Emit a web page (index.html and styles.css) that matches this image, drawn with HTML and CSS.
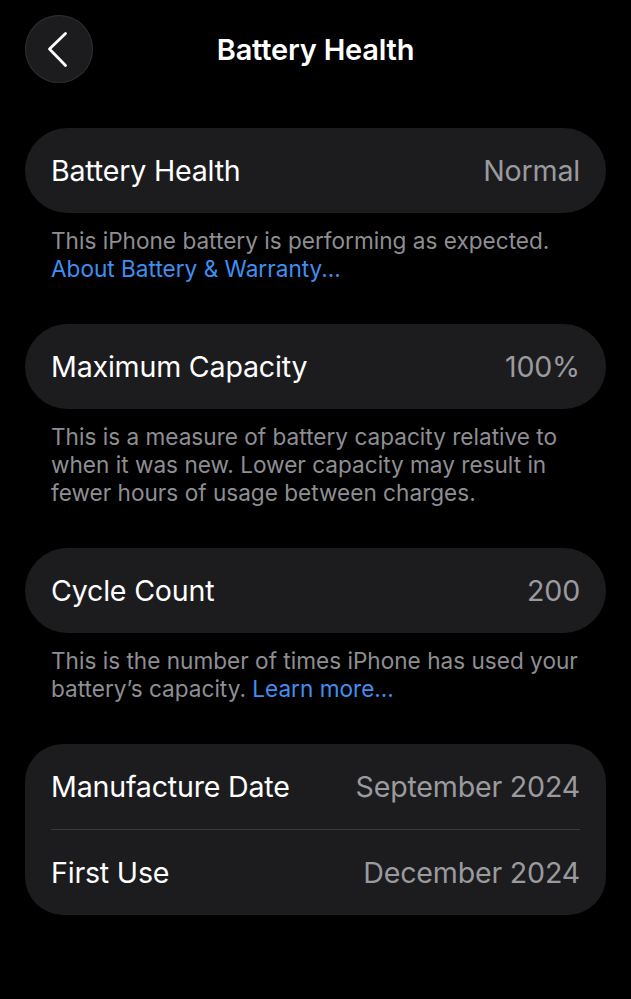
FILE: index.html
```html
<!DOCTYPE html>
<html>
<head>
<meta charset="utf-8">
<link rel="stylesheet" href="styles.css">
</head>
<body>
<div class="screen">
  <header class="header">
    <div class="back">
      <svg width="68" height="68" viewBox="0 0 68 68"><path d="M40.5 18.5 L24.5 34 L40.5 50.5" fill="none" stroke="#ffffff" stroke-width="2.8" stroke-linecap="round" stroke-linejoin="round"/></svg>
    </div>
    <h1 class="title">Battery Health</h1>
    <div></div>
  </header>
  <main class="content">
    <section class="group">
      <div class="card">
        <div class="row"><span class="label">Battery Health</span><span class="value">Normal</span></div>
      </div>
      <p class="footer">This iPhone battery is performing as expected.<br><span class="link">About Battery &amp; Warranty...</span></p>
    </section>
    <section class="group">
      <div class="card">
        <div class="row"><span class="label">Maximum Capacity</span><span class="value">100%</span></div>
      </div>
      <p class="footer">This is a measure of battery capacity relative to when it was new. Lower capacity may result in fewer hours of usage between charges.</p>
    </section>
    <section class="group">
      <div class="card">
        <div class="row"><span class="label">Cycle Count</span><span class="value">200</span></div>
      </div>
      <p class="footer">This is the number of times iPhone has used your battery’s capacity. <span class="link">Learn more...</span></p>
    </section>
    <section class="group">
      <div class="card card-multi">
        <div class="row"><span class="label">Manufacture Date</span><span class="value">September 2024</span></div>
        <div class="sep"></div>
        <div class="row"><span class="label">First Use</span><span class="value">December 2024</span></div>
      </div>
    </section>
  </main>
</div>
</body>
</html>
```
FILE: styles.css
```css
* { box-sizing: border-box; }
html, body { margin: 0; padding: 0; background: #000; }
body {
  font-family: Inter, "Noto Sans", "Liberation Sans", sans-serif;
  color: #fff;
  width: 631px;
  min-height: 999px;
}
.header {
  display: grid;
  grid-template-columns: 1fr auto 1fr;
  align-items: center;
  padding: 15px 25px 0 25px;
  height: 83px;
}
.back {
  width: 68px;
  height: 68px;
  border-radius: 50%;
  background: #1c1c1e;
  box-shadow: inset 0 0 0 1px #2e2e30;
  display: flex;
}
.title {
  margin: 0;
  font-size: 29px;
  font-weight: 600;
  letter-spacing: -0.2px;
  text-align: center;
}
.content {
  padding: 45px 25px 0 25px;
  display: flex;
  flex-direction: column;
  gap: 41px;
}
.card {
  background: #1c1c1e;
  border-radius: 43px;
  padding: 0 26px;
}
.card-multi { border-radius: 38px; }
.row {
  height: 85px;
  display: flex;
  align-items: center;
  justify-content: space-between;
  font-size: 28.6px;
  letter-spacing: -0.2px;
}
.label { color: #fff; }
.value { color: #9a9a9f; }
.sep {
  height: 1px;
  background: #3a3a3c;
}
.footer {
  margin: 14px 0 0 0;
  padding: 0 26px;
  font-size: 22.6px;
  line-height: 28px;
  color: #8e8e93;
  letter-spacing: 0;
}
.link { color: #3f8ff2; }
```
